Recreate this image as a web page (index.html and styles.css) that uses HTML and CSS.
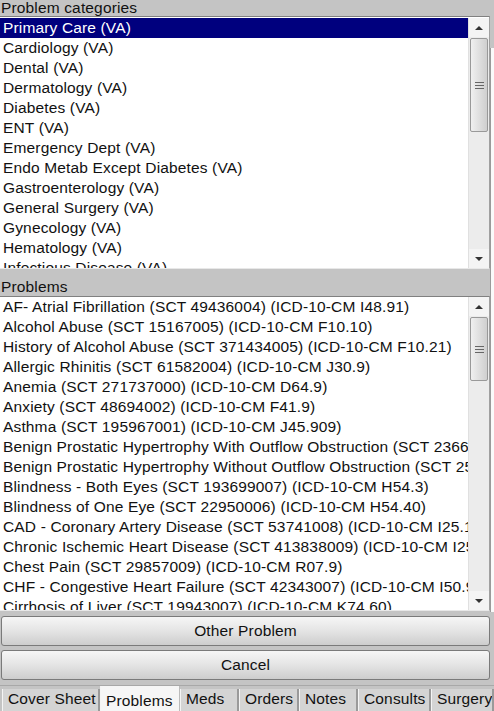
FILE: index.html
```html
<!DOCTYPE html>
<html>
<head>
<meta charset="utf-8">
<link rel="stylesheet" href="styles.css">
</head>
<body>
<div class="screen">
  <div class="main">
    <div class="label label-top">Problem categories</div>
    <div class="listbox list-cat">
      <div class="rows">
        <div class="row selected">Primary Care (VA)</div>
        <div class="row">Cardiology (VA)</div>
        <div class="row">Dental (VA)</div>
        <div class="row">Dermatology (VA)</div>
        <div class="row">Diabetes (VA)</div>
        <div class="row">ENT (VA)</div>
        <div class="row">Emergency Dept (VA)</div>
        <div class="row">Endo Metab Except Diabetes (VA)</div>
        <div class="row">Gastroenterology (VA)</div>
        <div class="row">General Surgery (VA)</div>
        <div class="row">Gynecology (VA)</div>
        <div class="row">Hematology (VA)</div>
        <div class="row">Infectious Disease (VA)</div>
      </div>
      <div class="scrollbar">
        <div class="arrow up"><span class="tri-up"></span></div>
        <div class="track">
          <div class="thumb thumb-cat"><span class="grip"></span></div>
        </div>
        <div class="arrow down"><span class="tri-down"></span></div>
      </div>
    </div>
    <div class="label label-mid">Problems</div>
    <div class="listbox list-prob">
      <div class="rows">
        <div class="row">AF- Atrial Fibrillation (SCT 49436004) (ICD-10-CM I48.91)</div>
        <div class="row">Alcohol Abuse (SCT 15167005) (ICD-10-CM F10.10)</div>
        <div class="row">History of Alcohol Abuse (SCT 371434005) (ICD-10-CM F10.21)</div>
        <div class="row">Allergic Rhinitis (SCT 61582004) (ICD-10-CM J30.9)</div>
        <div class="row">Anemia (SCT 271737000) (ICD-10-CM D64.9)</div>
        <div class="row">Anxiety (SCT 48694002) (ICD-10-CM F41.9)</div>
        <div class="row">Asthma (SCT 195967001) (ICD-10-CM J45.909)</div>
        <div class="row">Benign Prostatic Hypertrophy With Outflow Obstruction (SCT 236628002) (ICD-10-CM N40.1)</div>
        <div class="row">Benign Prostatic Hypertrophy Without Outflow Obstruction (SCT 254900004) (ICD-10-CM N40.0)</div>
        <div class="row">Blindness - Both Eyes (SCT 193699007) (ICD-10-CM H54.3)</div>
        <div class="row">Blindness of One Eye (SCT 22950006) (ICD-10-CM H54.40)</div>
        <div class="row">CAD - Coronary Artery Disease (SCT 53741008) (ICD-10-CM I25.10)</div>
        <div class="row">Chronic Ischemic Heart Disease (SCT 413838009) (ICD-10-CM I25.9)</div>
        <div class="row">Chest Pain (SCT 29857009) (ICD-10-CM R07.9)</div>
        <div class="row">CHF - Congestive Heart Failure (SCT 42343007) (ICD-10-CM I50.9)</div>
        <div class="row">Cirrhosis of Liver (SCT 19943007) (ICD-10-CM K74.60)</div>
      </div>
      <div class="scrollbar">
        <div class="arrow up"><span class="tri-up"></span></div>
        <div class="track">
          <div class="thumb thumb-prob"><span class="grip"></span></div>
        </div>
        <div class="arrow down"><span class="tri-down"></span></div>
      </div>
    </div>
    <div class="buttons">
      <div class="button">Other Problem</div>
      <div class="button">Cancel</div>
    </div>
  </div>
  <div class="edge">
    <div class="edge-top"></div>
    <div class="edge-panel"></div>
    <div class="edge-bottom"></div>
  </div>
  <div class="tabs">
    <div class="tab tab-cover">Cover Sheet</div>
    <div class="tab tab-problems active">Problems</div>
    <div class="tab tab-meds">Meds</div>
    <div class="tab tab-orders">Orders</div>
    <div class="tab tab-notes">Notes</div>
    <div class="tab tab-consults">Consults</div>
    <div class="tab tab-surgery">Surgery</div>
  </div>
</div>
</body>
</html>
```

FILE: styles.css
```css
html, body {
  margin: 0;
  padding: 0;
}
body {
  width: 494px;
  height: 711px;
  overflow: hidden;
  background: #c4c4c4;
  font-family: "Liberation Sans", Arial, sans-serif;
  font-size: 15.5px;
  letter-spacing: 0.15px;
  color: #111;
}
.screen {
  display: grid;
  grid-template-columns: 490px 4px;
  grid-template-rows: 685px 26px;
  width: 494px;
  height: 711px;
}
.main {
  display: flex;
  flex-direction: column;
}
.label {
  padding-left: 1px;
  line-height: 16px;
  color: #111;
}
.label-top {
  height: 16px;
}
.label-mid {
  height: 27px;
  box-sizing: border-box;
  padding-top: 9px;
  line-height: 17px;
}
.listbox {
  display: flex;
  background: #fff;
  border-top: 1px solid #808080;
  border-right: 1px solid #a0a0a0;
  border-bottom: 1px solid #e8e8e8;
  box-sizing: border-box;
  overflow: hidden;
}
.list-cat {
  height: 253px;
  padding-top: 1px;
}
.list-prob {
  height: 315px;
}
.rows {
  flex: 1;
  min-width: 0;
  overflow: hidden;
}
.row {
  height: 20px;
  line-height: 20px;
  padding-left: 3px;
  white-space: nowrap;
  overflow: hidden;
}
.row.selected {
  background: #00007e;
  color: #fff;
}
.scrollbar {
  width: 20px;
  flex: none;
  display: flex;
  flex-direction: column;
  background: #ececec;
  border-left: 1px solid #e0e0e0;
}
.arrow {
  height: 19px;
  flex: none;
  display: flex;
  align-items: center;
  justify-content: center;
  background: #f4f4f4;
}
.tri-up {
  width: 0;
  height: 0;
  border-left: 4px solid transparent;
  border-right: 4px solid transparent;
  border-bottom: 4px solid #333;
}
.tri-down {
  width: 0;
  height: 0;
  border-left: 4px solid transparent;
  border-right: 4px solid transparent;
  border-top: 4px solid #333;
}
.track {
  flex: 1;
  padding: 1px 1px 0 1px;
  background: #ececec;
}
.thumb {
  box-sizing: border-box;
  border: 1px solid #999;
  border-radius: 2px;
  background: linear-gradient(to right, #f0f0f0, #dcdcdc 60%, #cfcfcf);
  display: flex;
  align-items: center;
  justify-content: center;
}
.thumb-cat {
  height: 94px;
}
.thumb-prob {
  height: 64px;
}
.grip {
  width: 9px;
  height: 7px;
  background: repeating-linear-gradient(to bottom, #666 0, #666 1px, transparent 1px, transparent 3px);
}
.buttons {
  display: flex;
  flex-direction: column;
  gap: 4px;
  padding: 5px 0 0 0;
}
.button {
  height: 30px;
  margin-left: 1px;
  box-sizing: border-box;
  border: 1px solid #7a7a7a;
  border-radius: 3px;
  background: linear-gradient(to bottom, #f6f6f6, #e4e4e4 50%, #cdcdcd);
  text-align: center;
  line-height: 28px;
  color: #111;
}
.edge {
  display: flex;
  flex-direction: column;
}
.edge-top {
  height: 48px;
  flex: none;
}
.edge-panel {
  height: 564px;
  flex: none;
  background: #fafafa;
  border-left: 1px solid #9a9a9a;
}
.edge-bottom {
  flex: 1;
}
.tabs {
  grid-column: 1 / 3;
  display: flex;
  align-items: flex-end;
  padding-left: 2px;
  border-top: 1px solid #a8a8a8;
  box-sizing: border-box;
  height: 26px;
}
.tab {
  height: 22px;
  box-sizing: border-box;
  background: #d4d4d4;
  border-left: 1px solid #f4f4f4;
  border-right: 2px solid #9a9a9a;
  line-height: 20px;
  padding-left: 5px;
  color: #111;
  white-space: nowrap;
  overflow: hidden;
  flex: none;
}
.tab.active {
  height: 25px;
  background: #f6f6f6;
  border-right: 1px solid #bbb;
  line-height: 25px;
  padding-top: 2px;
}
.tab-cover { width: 98px; }
.tab-problems { width: 80px; }
.tab-meds { width: 59px; }
.tab-orders { width: 60px; }
.tab-notes { width: 59px; }
.tab-consults { width: 73px; }
.tab-surgery { width: 63px; }
```
